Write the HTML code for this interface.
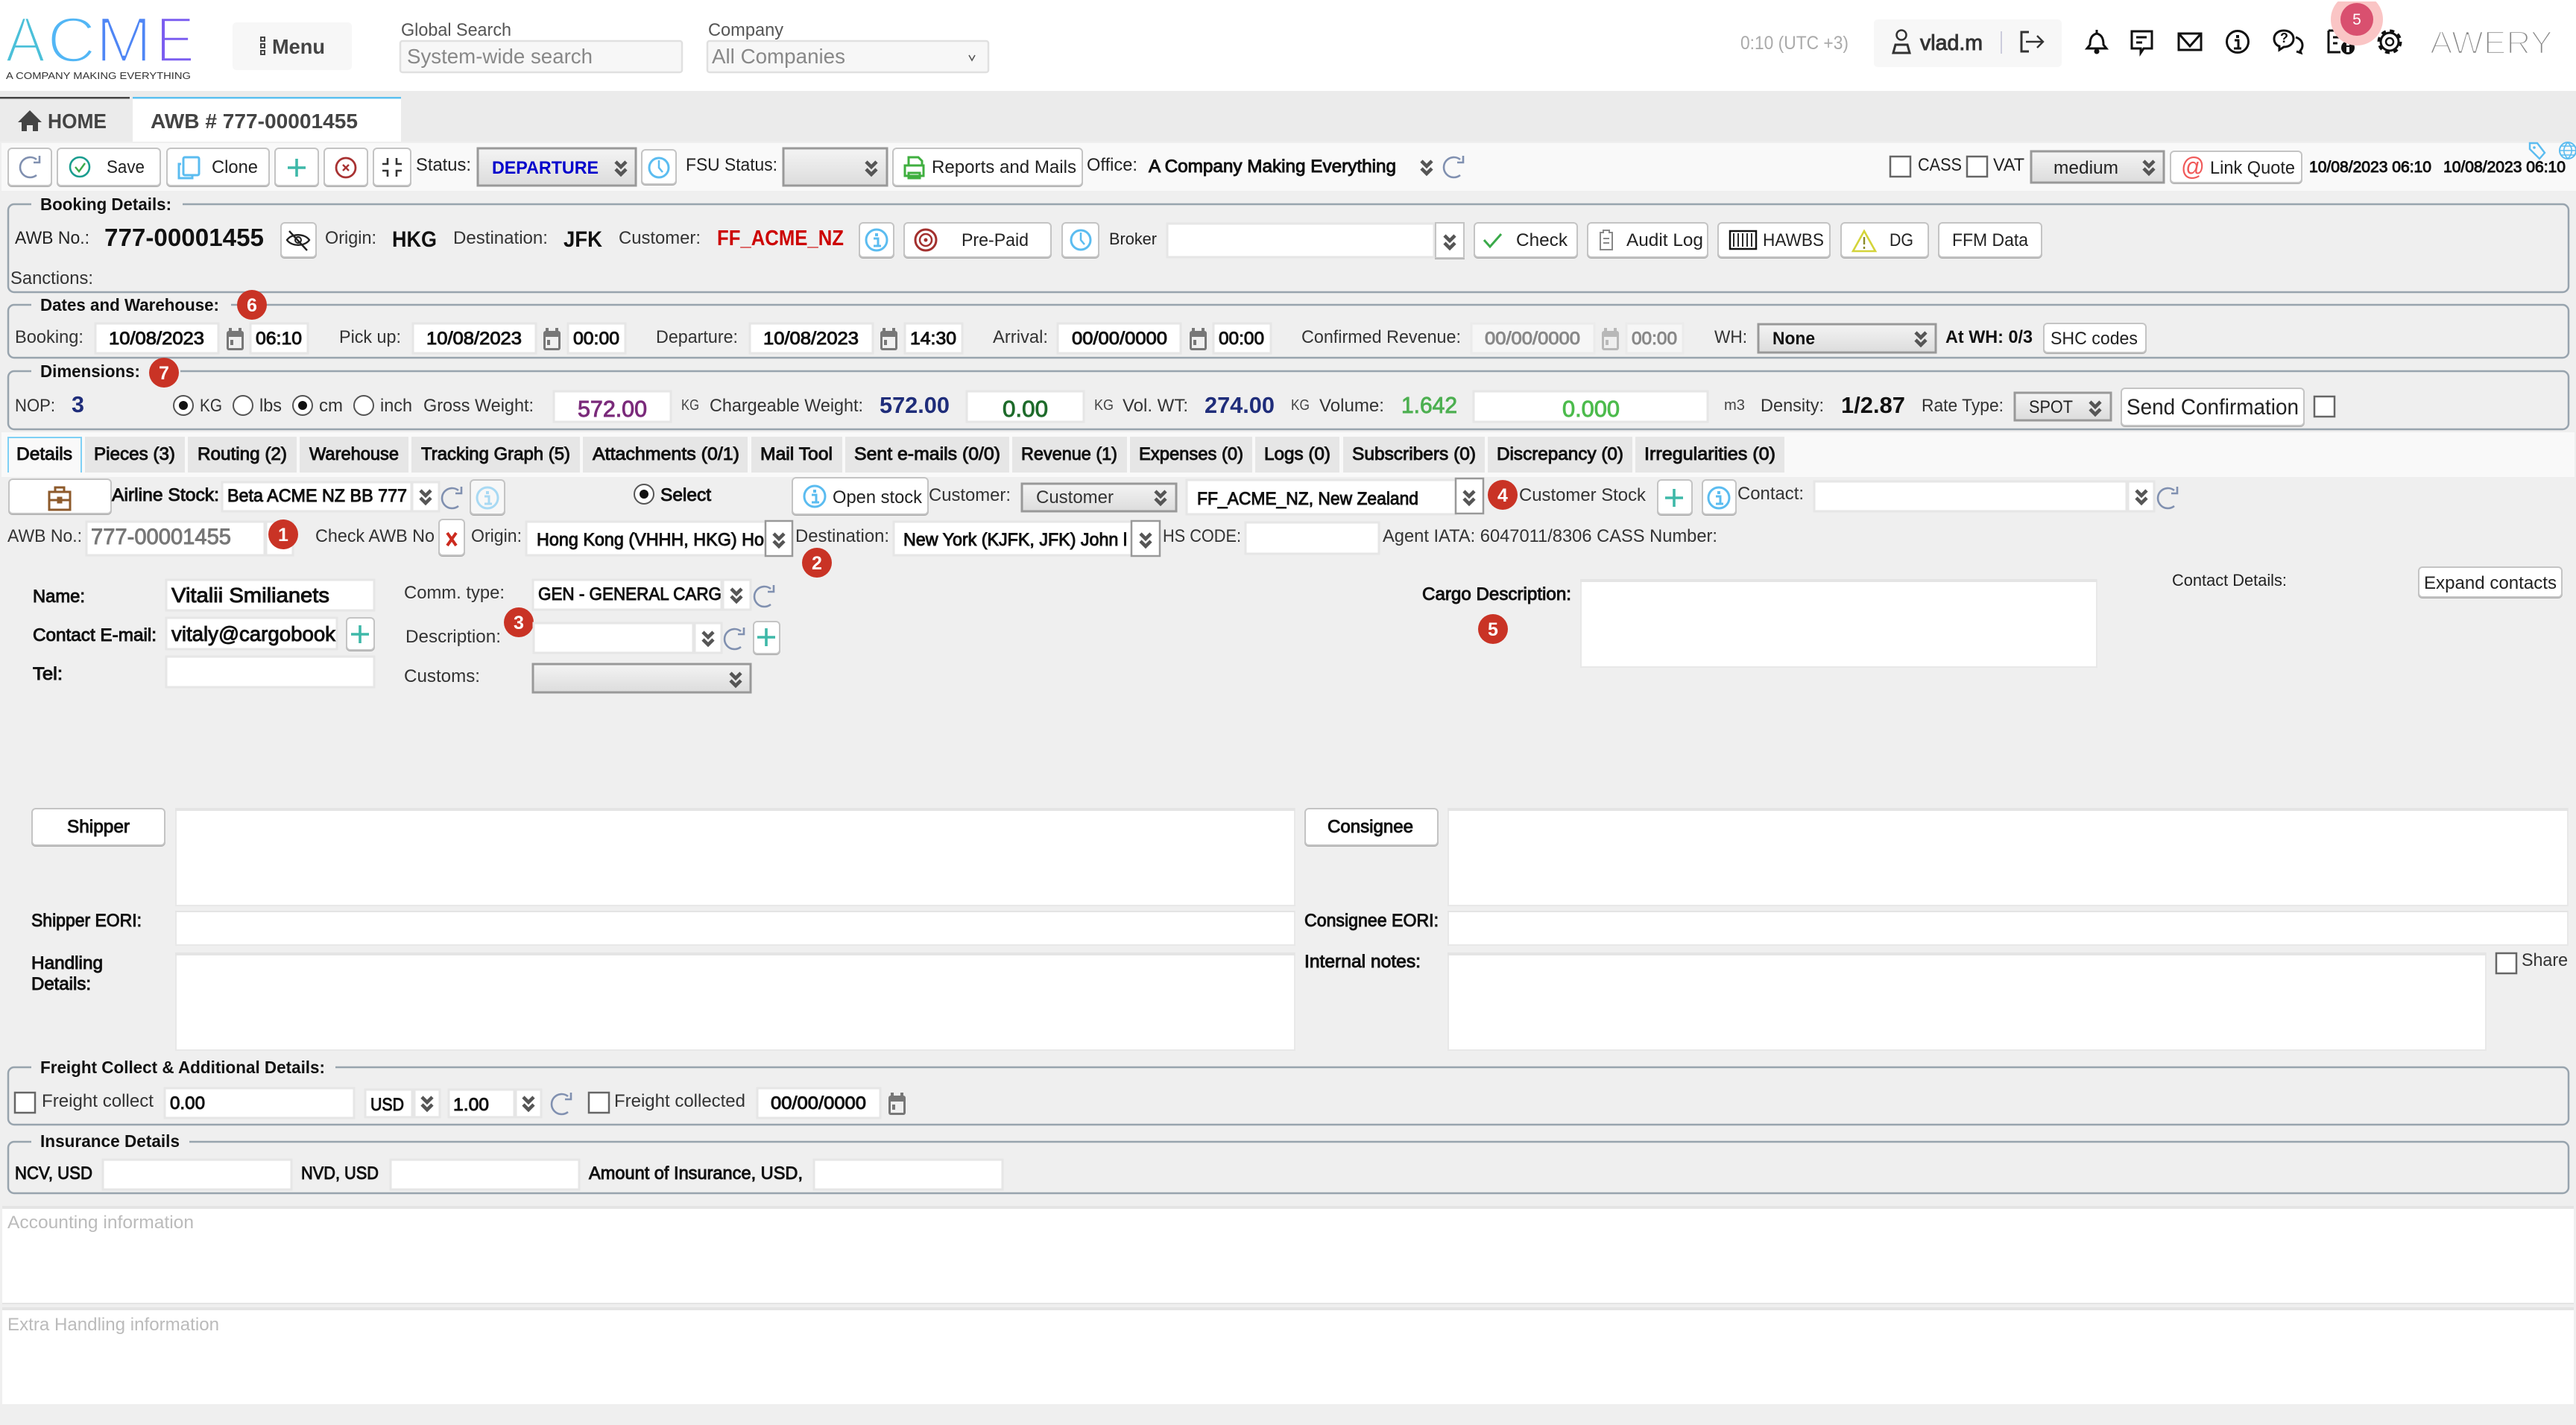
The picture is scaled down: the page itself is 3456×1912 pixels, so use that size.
<!DOCTYPE html>
<html><head><meta charset="utf-8"><title>AWB</title>
<style>
html,body{margin:0;padding:0;background:#efefef;width:3456px;height:1912px;overflow:hidden}
svg{display:block;font-family:"Liberation Sans",Arial,sans-serif}
text{font-size:24px;fill:#222;white-space:pre}
.b{fill:#fff;stroke:#c4c4c4;stroke-width:2;filter:drop-shadow(0 1.5px 0 #aaa)}
.i{fill:#fff;stroke:#e6e6e6;stroke-width:3}
.d{fill:#f6f6f6;stroke:#ebebeb;stroke-width:3}
.s{fill:url(#sg);stroke:#999;stroke-width:3}
.ta{fill:#fff;stroke:#e8e8e8;stroke-width:2}
.band{fill:#e4e4e4}
.fs{fill:none;stroke:#98a4ae;stroke-width:2.5}
.g{fill:#efefef}
text.m{stroke:#111;stroke-width:.95;fill:#111}
text.bd{font-weight:700;fill:#111}
text.lg{font-weight:700;fill:#111;font-size:23px}
text.sm{font-size:20px;fill:#444}
text.n{font-size:31px;font-weight:700;fill:#1f2d7a}
text.bdg{fill:#fff;font-size:25px;font-weight:700;text-anchor:middle}
.bc{fill:#c93325}
.st{fill:none;stroke:#111;stroke-width:3}
.rf{fill:none;stroke:#8090b0;stroke-width:2.6}
.teal{fill:none;stroke:#3eb8a8;stroke-width:3.6}
.blue{fill:none;stroke:#5bbcf0;stroke-width:3}
</style></head><body>
<svg xmlns="http://www.w3.org/2000/svg" width="3456" height="1912" viewBox="0 0 3456 1912">
<defs>
<linearGradient id="sg" x1="0" y1="0" x2="0" y2="1"><stop offset="0" stop-color="#f4f4f4"/><stop offset="1" stop-color="#dcdcdc"/></linearGradient>
<path id="cv" d="M-7-10 0-3 7-10M-7 0 0 7 7 0" fill="none" stroke="#555" stroke-width="4.6"/>
<g id="rf"><path class="rf" d="M9-10A13.5 13.5 0 1 0 9 11"/><path class="rf" d="M13-15V-6H5"/></g>
<g id="cal"><path d="M4 0h4v6H4zM17 0h4v6h-4z" fill="#777"/><rect x="1" y="4" width="23" height="26" rx="3" fill="#777"/><rect x="4" y="12" width="17" height="15" fill="#f0f0f0"/><rect x="6" y="16" width="4" height="7" fill="#777"/></g>
<g id="inf"><circle r="14" fill="none" stroke="#5bbcf0" stroke-width="3"/><rect x="-2" y="-9" width="4" height="4" fill="#5bbcf0"/><path d="M-4-2H2V8M-4 8H6" fill="none" stroke="#5bbcf0" stroke-width="3"/></g>
<g id="pl"><path class="teal" d="M-12 0H12M0-12V12"/></g>
<g id="cb"><rect width="27" height="27" fill="#fff" stroke="#666" stroke-width="2.5"/></g>
</defs>

<rect width="3456" height="1912" fill="#efefef"/>
<!-- header -->
<rect width="3456" height="122" fill="#fff"/>
<g stroke="#fff" stroke-width="3.6">
<text x="7" y="83" style="font-size:86px;fill:#4bc0d9" textLength="54" lengthAdjust="spacingAndGlyphs">A</text>
<text x="63" y="83" style="font-size:86px;fill:#52b6f5" textLength="66" lengthAdjust="spacingAndGlyphs">C</text>
<text x="128" y="83" style="font-size:86px;fill:#4f86f5" textLength="76" lengthAdjust="spacingAndGlyphs">M</text>
<text x="209" y="83" style="font-size:86px;fill:#7a5cf0" textLength="52" lengthAdjust="spacingAndGlyphs">E</text>
</g>
<text x="8" y="106" style="font-size:13px;fill:#333" textLength="248" lengthAdjust="spacingAndGlyphs">A COMPANY MAKING EVERYTHING</text>
<rect x="312" y="30" width="160" height="64" rx="5" fill="#f7f7f7"/>
<path d="M350 50h5v5h-5zM350 59h5v5h-5zM350 68h5v5h-5z" fill="none" stroke="#444" stroke-width="2"/>
<text class="bd" x="365" y="72" style="font-size:28px;fill:#444" textLength="71" lengthAdjust="spacingAndGlyphs">Menu</text>
<text x="538" y="48" style="fill:#555" textLength="148" lengthAdjust="spacingAndGlyphs">Global Search</text>
<rect x="537" y="55" width="378" height="42" rx="3" fill="#f7f7f7" stroke="#e0e0e0" stroke-width="2.5"/>
<text x="546" y="85" style="font-size:28px;fill:#888" textLength="249" lengthAdjust="spacingAndGlyphs">System-wide search</text>
<text x="950" y="48" style="fill:#555" textLength="101" lengthAdjust="spacingAndGlyphs">Company</text>
<rect x="949" y="55" width="377" height="42" rx="3" fill="#f7f7f7" stroke="#e0e0e0" stroke-width="2.5"/>
<text x="955" y="85" style="font-size:28px;fill:#888" textLength="179" lengthAdjust="spacingAndGlyphs">All Companies</text>
<path d="M1300 74l4 7 4-7" fill="none" stroke="#555" stroke-width="1.6"/>

<text x="2335" y="66" style="font-size:25px;fill:#aaa" textLength="145" lengthAdjust="spacingAndGlyphs">0:10 (UTC +3)</text>
<rect x="2514" y="26" width="252" height="64" rx="5" fill="#f7f7f7"/>
<circle cx="2551" cy="47" r="6.5" fill="none" stroke="#333" stroke-width="2.5"/>
<path d="M2540 71l3-11h16l3 11z" fill="none" stroke="#333" stroke-width="3"/>
<text class="m" x="2576" y="67" style="font-size:29px;fill:#333;stroke:#333" textLength="84" lengthAdjust="spacingAndGlyphs">vlad.m</text>
<path d="M2685 42v30" stroke="#ccd" stroke-width="2"/>
<path d="M2722 43h-10v26h10" fill="none" stroke="#333" stroke-width="3"/><path d="M2718 56h22M2733 48l8 8-8 8" fill="none" stroke="#333" stroke-width="2.4"/>
<path class="st" d="M2813 40v5C2805 47 2804 54 2804 60L2800 65H2826L2822 60C2822 54 2821 47 2813 45Z"/><circle cx="2813" cy="69" r="3.5" fill="#111"/>
<path class="st" d="M2860 42h27v23h-11l-4 6v-6h-12z"/><path d="M2866 50h14M2866 57h8" stroke="#111" stroke-width="3"/>
<rect class="st" x="2923" y="45" width="30" height="22"/><path class="st" d="M2923 45l15 17 15-17"/>
<circle class="st" cx="3002" cy="56" r="14.5"/><rect x="3000" y="47" width="4" height="4" fill="#111"/><path d="M2998 54h5v10M2997 65h10" fill="none" stroke="#111" stroke-width="3"/>
<path class="st" d="M3064 41c-8 0-13 5-13 11 0 5 3 9 7 10l0 5 6-4c8 0 13-5 13-11 0-6-5-11-13-11z" /><path class="st" d="M3080 50c6 2 9 6 9 11 0 3-1 5-3 7l1 3-6-2"/>
<text x="3059" y="57" style="font-size:18px;font-weight:700;fill:#111">?</text>
<path class="st" d="M3124 41h24v19M3124 41v29h16"/><path d="M3130 50h10M3130 58h6" stroke="#111" stroke-width="3"/><circle cx="3150" cy="64" r="9" fill="#111"/><rect x="3148" y="58" width="4" height="3" fill="#fff"/><rect x="3148" y="63" width="4" height="7" fill="#fff"/>
<circle cx="3206" cy="56" r="12" fill="none" stroke="#111" stroke-width="3"/><circle cx="3206" cy="56" r="14.5" fill="none" stroke="#111" stroke-width="4" stroke-dasharray="6 5.4"/><circle cx="3206" cy="56" r="5" fill="none" stroke="#111" stroke-width="2.5"/>
<circle cx="3162" cy="26" r="35" fill="#fac5c5"/><circle cx="3162" cy="26" r="22" fill="#d9506f"/>
<text x="3162" y="33" style="font-size:21px;fill:#fff;text-anchor:middle">5</text>
<rect y="0" width="3456" height="2" fill="#fff"/>
<text x="3260" y="72" stroke="#fff" stroke-width="2.4" style="font-size:44px;fill:#888" textLength="165" lengthAdjust="spacingAndGlyphs">AWERY</text>

<!-- tab bar -->
<rect y="122" width="3456" height="68" fill="#ebebeb"/>
<rect y="130" width="174" height="2.5" fill="#444"/>
<rect x="178" y="130" width="360" height="60" fill="#fff"/><rect x="178" y="130" width="360" height="2.5" fill="#5bc0f0"/>
<path d="M40 148l16 16h-5v12h-7v-8h-8v8h-7v-12h-5z" fill="#444"/>
<text class="bd" x="64" y="172" style="font-size:28px;fill:#444" textLength="79" lengthAdjust="spacingAndGlyphs">HOME</text>
<text class="bd" x="202" y="172" style="font-size:28px;fill:#444" textLength="278" lengthAdjust="spacingAndGlyphs">AWB # 777-00001455</text>

<!-- toolbar -->
<rect x="2" y="192" width="3454" height="64" fill="#f9f9f9"/>
<rect class="b" x="11" y="199" width="58" height="50" rx="5"/><use href="#rf" x="40" y="224"/>
<rect class="b" x="77" y="199" width="138" height="50" rx="5"/>
<circle cx="107" cy="224" r="13" fill="none" stroke="#1a9d8f" stroke-width="2.6"/><path d="M101 224l5 6 8-11" fill="none" stroke="#3aaa4a" stroke-width="2.4"/>
<text x="143" y="232" textLength="51" lengthAdjust="spacingAndGlyphs">Save</text>
<rect class="b" x="224" y="199" width="137" height="50" rx="5"/>
<path d="M243 220h-3v19h18v-3" fill="none" stroke="#5bbcf0" stroke-width="3"/><rect x="246" y="211" width="21" height="24" rx="2" fill="none" stroke="#5bbcf0" stroke-width="3"/>
<text x="284" y="232" textLength="62" lengthAdjust="spacingAndGlyphs">Clone</text>
<rect class="b" x="369" y="199" width="58" height="50" rx="5"/><use href="#pl" x="398" y="225"/>
<rect class="b" x="435" y="199" width="58" height="50" rx="5"/>
<circle cx="464" cy="225" r="13" fill="none" stroke="#a83232" stroke-width="2.8"/><path d="M460 221l8 8M468 221l-8 8" stroke="#a83232" stroke-width="2.4"/>
<rect class="b" x="501" y="199" width="50" height="50" rx="5"/>
<path d="M520 212v8h-7M532 212v8h7M520 237v-8h-7M532 237v-8h7" fill="none" stroke="#333" stroke-width="2.6"/>
<text x="558" y="229" textLength="74" lengthAdjust="spacingAndGlyphs">Status:</text>
<rect class="s" x="641" y="199" width="212" height="50"/>
<text class="bd" x="660" y="233" style="fill:#0000cc" textLength="143" lengthAdjust="spacingAndGlyphs">DEPARTURE</text><use href="#cv" x="833" y="227"/>
<rect class="b" x="861" y="201" width="46" height="46" rx="5"/><circle cx="884" cy="225" r="13" fill="none" stroke="#5bbcf0" stroke-width="3"/><path d="M884 215v10l5 6" fill="none" stroke="#5bbcf0" stroke-width="2.5"/>
<text x="920" y="229" textLength="123" lengthAdjust="spacingAndGlyphs">FSU Status:</text>
<rect class="s" x="1051" y="199" width="139" height="50"/><use href="#cv" x="1169" y="227"/>
<rect class="b" x="1198" y="199" width="254" height="50" rx="5"/>
<path d="M1219 222v-11h13l5 5v6M1214 222h25v14h-25zM1219 232h15v7h-15z" fill="none" stroke="#3faf3f" stroke-width="3"/>
<text x="1250" y="232" textLength="194" lengthAdjust="spacingAndGlyphs">Reports and Mails</text>
<text x="1458" y="229" textLength="68" lengthAdjust="spacingAndGlyphs">Office:</text>
<text class="m" x="1541" y="231" textLength="332" lengthAdjust="spacingAndGlyphs">A Company Making Everything</text>
<use href="#cv" x="1914" y="226"/><use href="#rf" x="1950" y="224"/>

<use href="#cb" x="2536" y="210"/><text x="2573" y="229" textLength="59" lengthAdjust="spacingAndGlyphs">CASS</text>
<use href="#cb" x="2639" y="210"/><text x="2674" y="229" textLength="42" lengthAdjust="spacingAndGlyphs">VAT</text>
<rect class="s" x="2725" y="203" width="178" height="42"/><text x="2755" y="233" textLength="87" lengthAdjust="spacingAndGlyphs">medium</text><use href="#cv" x="2883" y="226"/>
<rect class="b" x="2912" y="203" width="176" height="42" rx="5"/>
<text x="2926" y="235" style="font-size:34px;fill:#f05a5a" textLength="32" lengthAdjust="spacingAndGlyphs">@</text>
<text x="2965" y="233" textLength="114" lengthAdjust="spacingAndGlyphs">Link Quote</text>
<text class="m" x="3098" y="231" style="font-size:21px" textLength="164" lengthAdjust="spacingAndGlyphs">10/08/2023 06:10</text>
<text class="m" x="3278" y="231" style="font-size:21px" textLength="164" lengthAdjust="spacingAndGlyphs">10/08/2023 06:10</text>
<path d="M3394 192h10l10 13-7 8-13-13z" fill="none" stroke="#5bbcf0" stroke-width="2.4"/><circle cx="3400" cy="198" r="1.8" fill="#5bbcf0"/>
<circle cx="3445" cy="202" r="11" fill="none" stroke="#5bbcf0" stroke-width="2"/><path d="M3434 202h22M3445 191c-7 7-7 15 0 22M3445 191c7 7 7 15 0 22M3436 196h18M3436 208h18" fill="none" stroke="#5bbcf0" stroke-width="1.6"/>

<!-- Booking details -->
<rect class="fs" x="11" y="274" width="3435" height="118" rx="8"/><rect class="g" x="42" y="268" width="203" height="12"/>
<text class="lg" x="54" y="282" textLength="176" lengthAdjust="spacingAndGlyphs">Booking Details:</text>
<text x="20" y="327" textLength="100" lengthAdjust="spacingAndGlyphs">AWB No.:</text>
<text class="bd" x="140" y="330" style="font-size:33px" textLength="214" lengthAdjust="spacingAndGlyphs">777-00001455</text>
<rect class="b" x="377" y="299" width="47" height="46" rx="5"/>
<path d="M385 322c6-9 24-9 30 0-6 9-24 9-30 0zM388 310l24 26" fill="none" stroke="#222" stroke-width="2.4"/><circle cx="400" cy="322" r="4" fill="none" stroke="#222" stroke-width="2"/>
<text x="436" y="327" textLength="69" lengthAdjust="spacingAndGlyphs" style="fill:#333">Origin:</text>
<text class="bd" x="526" y="331" style="font-size:30px" textLength="60" lengthAdjust="spacingAndGlyphs">HKG</text>
<text x="608" y="327" textLength="127" lengthAdjust="spacingAndGlyphs" style="fill:#333">Destination:</text>
<text class="bd" x="756" y="331" style="font-size:30px" textLength="52" lengthAdjust="spacingAndGlyphs">JFK</text>
<text x="830" y="327" textLength="110" lengthAdjust="spacingAndGlyphs" style="fill:#333">Customer:</text>
<text class="bd" x="962" y="329" style="font-size:29px;fill:#cc0000" textLength="170" lengthAdjust="spacingAndGlyphs">FF_ACME_NZ</text>
<rect class="b" x="1153" y="299" width="46" height="46" rx="5"/><use href="#inf" x="1176" y="322"/>
<rect class="b" x="1213" y="299" width="197" height="46" rx="5"/>
<circle cx="1242" cy="322" r="14" fill="none" stroke="#a3302e" stroke-width="3"/><circle cx="1242" cy="322" r="8" fill="none" stroke="#a3302e" stroke-width="2.5"/><circle cx="1242" cy="322" r="2.5" fill="#a3302e"/>
<text x="1290" y="330" textLength="90" lengthAdjust="spacingAndGlyphs">Pre-Paid</text>
<rect class="b" x="1425" y="299" width="49" height="46" rx="5"/><circle cx="1450" cy="322" r="13" fill="none" stroke="#5bbcf0" stroke-width="3"/><path d="M1450 312v10l5 6" fill="none" stroke="#5bbcf0" stroke-width="2.5"/>
<text x="1488" y="328" style="font-size:22px" textLength="64" lengthAdjust="spacingAndGlyphs">Broker</text>
<rect class="i" x="1566" y="300" width="358" height="45"/>
<rect class="b" x="1926" y="299" width="38" height="47"/><use href="#cv" x="1945" y="326"/>
<rect class="b" x="1978" y="299" width="138" height="46" rx="5"/><path d="M1991 322l8 9 15-17" fill="none" stroke="#3aaa4a" stroke-width="3"/>
<text x="2034" y="330" textLength="69" lengthAdjust="spacingAndGlyphs">Check</text>
<rect class="b" x="2130" y="299" width="161" height="46" rx="5"/><path d="M2147 312h4v-3h8v3h4v23h-16zM2151 320h8M2151 326h8" fill="none" stroke="#888" stroke-width="2"/>
<text x="2182" y="330" textLength="103" lengthAdjust="spacingAndGlyphs">Audit Log</text>
<rect class="b" x="2305" y="299" width="150" height="46" rx="5"/><rect x="2321" y="310" width="35" height="24" fill="none" stroke="#111" stroke-width="2.5"/><path d="M2326 313v18M2332 313v18M2338 313v18M2344 313v18M2350 313v18" stroke="#111" stroke-width="1.8"/>
<text x="2365" y="330" textLength="82" lengthAdjust="spacingAndGlyphs">HAWBS</text>
<rect class="b" x="2470" y="299" width="117" height="46" rx="5"/><path d="M2501 310l15 27h-30z" fill="none" stroke="#d4d43a" stroke-width="2.6"/><path d="M2501 318v10M2501 331v3" stroke="#8a8a2a" stroke-width="2.4"/>
<text x="2535" y="330" textLength="32" lengthAdjust="spacingAndGlyphs">DG</text>
<rect class="b" x="2601" y="299" width="138" height="46" rx="5"/><text x="2619" y="330" textLength="102" lengthAdjust="spacingAndGlyphs">FFM Data</text>
<text x="14" y="381" textLength="111" lengthAdjust="spacingAndGlyphs" style="fill:#333">Sanctions:</text>

<!-- Dates -->
<rect class="fs" x="11" y="409" width="3435" height="71" rx="8"/><rect class="g" x="42" y="403" width="268" height="12"/>
<text class="lg" x="54" y="417" textLength="240" lengthAdjust="spacingAndGlyphs">Dates and Warehouse:</text>
<circle class="bc" cx="338" cy="409" r="20"/><text class="bdg" x="338" y="418">6</text>
<text x="20" y="460" textLength="92" lengthAdjust="spacingAndGlyphs" style="fill:#333">Booking:</text>
<rect class="i" x="128" y="434" width="165" height="40"/><text class="m" x="146" y="462" textLength="128" lengthAdjust="spacingAndGlyphs">10/08/2023</text><use href="#cal" x="303" y="440"/>
<rect class="i" x="336" y="434" width="77" height="40"/><text class="m" x="343" y="462" textLength="62" lengthAdjust="spacingAndGlyphs">06:10</text>
<text x="455" y="460" textLength="83" lengthAdjust="spacingAndGlyphs" style="fill:#333">Pick up:</text>
<rect class="i" x="554" y="434" width="165" height="40"/><text class="m" x="572" y="462" textLength="128" lengthAdjust="spacingAndGlyphs">10/08/2023</text><use href="#cal" x="728" y="440"/>
<rect class="i" x="762" y="434" width="77" height="40"/><text class="m" x="769" y="462" textLength="62" lengthAdjust="spacingAndGlyphs">00:00</text>
<text x="880" y="460" textLength="110" lengthAdjust="spacingAndGlyphs" style="fill:#333">Departure:</text>
<rect class="i" x="1006" y="434" width="165" height="40"/><text class="m" x="1024" y="462" textLength="128" lengthAdjust="spacingAndGlyphs">10/08/2023</text><use href="#cal" x="1180" y="440"/>
<rect class="i" x="1214" y="434" width="77" height="40"/><text class="m" x="1221" y="462" textLength="62" lengthAdjust="spacingAndGlyphs">14:30</text>
<text x="1332" y="460" textLength="74" lengthAdjust="spacingAndGlyphs" style="fill:#333">Arrival:</text>
<rect class="i" x="1419" y="434" width="165" height="40"/><text class="m" x="1438" y="462" textLength="128" lengthAdjust="spacingAndGlyphs">00/00/0000</text><use href="#cal" x="1595" y="440"/>
<rect class="i" x="1628" y="434" width="77" height="40"/><text class="m" x="1635" y="462" textLength="61" lengthAdjust="spacingAndGlyphs">00:00</text>
<text x="1746" y="460" textLength="214" lengthAdjust="spacingAndGlyphs" style="fill:#333">Confirmed Revenue:</text>
<rect class="d" x="1974" y="434" width="165" height="40"/><text class="m" x="1992" y="462" style="fill:#888;stroke:#888" textLength="128" lengthAdjust="spacingAndGlyphs">00/00/0000</text>
<g opacity=".45"><use href="#cal" x="2148" y="440"/></g>
<rect class="d" x="2182" y="434" width="76" height="40"/><text class="m" x="2189" y="462" style="fill:#888;stroke:#888" textLength="61" lengthAdjust="spacingAndGlyphs">00:00</text>
<text x="2300" y="460" textLength="44" lengthAdjust="spacingAndGlyphs" style="fill:#333">WH:</text>
<rect class="s" x="2359" y="435" width="238" height="38"/><text class="bd" x="2378" y="462" textLength="57" lengthAdjust="spacingAndGlyphs">None</text><use href="#cv" x="2577" y="456"/>
<text class="bd" x="2610" y="460" textLength="117" lengthAdjust="spacingAndGlyphs">At WH: 0/3</text>
<rect class="b" x="2742" y="434" width="137" height="39" rx="5"/><text x="2751" y="462" textLength="117" lengthAdjust="spacingAndGlyphs">SHC codes</text>

<!-- Dimensions -->
<rect class="fs" x="11" y="498" width="3435" height="78" rx="8"/><rect class="g" x="42" y="492" width="200" height="12"/>
<text class="lg" x="54" y="506" textLength="134" lengthAdjust="spacingAndGlyphs">Dimensions:</text>
<circle class="bc" cx="220" cy="500" r="20"/><text class="bdg" x="220" y="509">7</text>
<text x="20" y="552" textLength="54" lengthAdjust="spacingAndGlyphs" style="fill:#333">NOP:</text>
<text class="n" x="96" y="553" textLength="17" lengthAdjust="spacingAndGlyphs">3</text>
<circle cx="246" cy="544" r="13" fill="#fff" stroke="#555" stroke-width="2"/><circle cx="246" cy="544" r="6" fill="#111"/><text x="268" y="552" textLength="30" lengthAdjust="spacingAndGlyphs" style="fill:#333">KG</text>
<circle cx="326" cy="544" r="13" fill="#fff" stroke="#555" stroke-width="2"/><text x="348" y="552" textLength="30" lengthAdjust="spacingAndGlyphs" style="fill:#333">lbs</text>
<circle cx="406" cy="544" r="13" fill="#fff" stroke="#555" stroke-width="2"/><circle cx="406" cy="544" r="6" fill="#111"/><text x="428" y="552" textLength="32" lengthAdjust="spacingAndGlyphs" style="fill:#333">cm</text>
<circle cx="488" cy="544" r="13" fill="#fff" stroke="#555" stroke-width="2"/><text x="510" y="552" textLength="43" lengthAdjust="spacingAndGlyphs" style="fill:#333">inch</text>
<text x="568" y="552" textLength="148" lengthAdjust="spacingAndGlyphs" style="fill:#333">Gross Weight:</text>
<rect class="i" x="743" y="525" width="157" height="41"/><text class="m" x="775" y="559" style="font-size:31px;fill:#7a2a7a;stroke:#7a2a7a" textLength="93" lengthAdjust="spacingAndGlyphs">572.00</text>
<text class="sm" x="914" y="550" textLength="24" lengthAdjust="spacingAndGlyphs">KG</text>
<text x="952" y="552" textLength="206" lengthAdjust="spacingAndGlyphs" style="fill:#333">Chargeable Weight:</text>
<text class="n" x="1180" y="554" textLength="94" lengthAdjust="spacingAndGlyphs">572.00</text>
<rect class="i" x="1297" y="525" width="157" height="41"/><text class="m" x="1345" y="559" style="font-size:31px;fill:#1e6b2b;stroke:#1e6b2b" textLength="61" lengthAdjust="spacingAndGlyphs">0.00</text>
<text class="sm" x="1468" y="550" textLength="26" lengthAdjust="spacingAndGlyphs">KG</text>
<text x="1506" y="552" textLength="88" lengthAdjust="spacingAndGlyphs" style="fill:#333">Vol. WT:</text>
<text class="n" x="1616" y="554" textLength="94" lengthAdjust="spacingAndGlyphs">274.00</text>
<text class="sm" x="1732" y="550" textLength="25" lengthAdjust="spacingAndGlyphs">KG</text>
<text x="1770" y="552" textLength="87" lengthAdjust="spacingAndGlyphs" style="fill:#333">Volume:</text>
<text class="n" x="1880" y="554" style="fill:#4caf50;font-weight:400;stroke:#4caf50;stroke-width:.9" textLength="75" lengthAdjust="spacingAndGlyphs">1.642</text>
<rect class="i" x="1977" y="525" width="314" height="41"/><text class="m" x="2096" y="559" style="font-size:31px;fill:#4cbb4c;stroke:#4cbb4c" textLength="77" lengthAdjust="spacingAndGlyphs">0.000</text>
<text class="sm" x="2313" y="550" textLength="28" lengthAdjust="spacingAndGlyphs">m3</text>
<text x="2362" y="552" textLength="85" lengthAdjust="spacingAndGlyphs" style="fill:#333">Density:</text>
<text class="bd" x="2470" y="554" style="font-size:31px" textLength="86" lengthAdjust="spacingAndGlyphs">1/2.87</text>
<text x="2578" y="552" textLength="110" lengthAdjust="spacingAndGlyphs" style="fill:#333">Rate Type:</text>
<rect class="s" x="2703" y="527" width="129" height="37"/><text x="2722" y="554" textLength="59" lengthAdjust="spacingAndGlyphs">SPOT</text><use href="#cv" x="2811" y="549"/>
<rect class="b" x="2846" y="521" width="245" height="50" rx="5"/><text x="2853" y="556" style="font-size:30px" textLength="231" lengthAdjust="spacingAndGlyphs">Send Confirmation</text>
<use href="#cb" x="3105" y="532"/>

<!-- sub tabs -->
<rect x="2" y="580" width="3452" height="60" fill="#f9f9f9"/>
<g fill="#e6e6e6">
<rect x="114" y="586" width="134" height="48"/><rect x="252" y="586" width="146" height="48"/><rect x="402" y="586" width="146" height="48"/><rect x="552" y="586" width="226" height="48"/><rect x="782" y="586" width="221" height="48"/><rect x="1008" y="586" width="122" height="48"/><rect x="1134" y="586" width="220" height="48"/><rect x="1358" y="586" width="154" height="48"/><rect x="1516" y="586" width="164" height="48"/><rect x="1684" y="586" width="113" height="48"/><rect x="1802" y="586" width="190" height="48"/><rect x="1996" y="586" width="194" height="48"/><rect x="2194" y="586" width="200" height="48"/>
</g>
<path d="M11 634V587H109V634" fill="none" stroke="#7fd0f5" stroke-width="2"/>
<g class="tb">
<text class="m" x="22" y="617" textLength="75" lengthAdjust="spacingAndGlyphs">Details</text>
<text class="m" x="126" y="617" textLength="109" lengthAdjust="spacingAndGlyphs">Pieces (3)</text>
<text class="m" x="265" y="617" textLength="120" lengthAdjust="spacingAndGlyphs">Routing (2)</text>
<text class="m" x="415" y="617" textLength="120" lengthAdjust="spacingAndGlyphs">Warehouse</text>
<text class="m" x="565" y="617" textLength="200" lengthAdjust="spacingAndGlyphs">Tracking Graph (5)</text>
<text class="m" x="795" y="617" textLength="197" lengthAdjust="spacingAndGlyphs">Attachments (0/1)</text>
<text class="m" x="1020" y="617" textLength="97" lengthAdjust="spacingAndGlyphs">Mail Tool</text>
<text class="m" x="1146" y="617" textLength="196" lengthAdjust="spacingAndGlyphs">Sent e-mails (0/0)</text>
<text class="m" x="1370" y="617" textLength="129" lengthAdjust="spacingAndGlyphs">Revenue (1)</text>
<text class="m" x="1528" y="617" textLength="140" lengthAdjust="spacingAndGlyphs">Expenses (0)</text>
<text class="m" x="1696" y="617" textLength="89" lengthAdjust="spacingAndGlyphs">Logs (0)</text>
<text class="m" x="1814" y="617" textLength="166" lengthAdjust="spacingAndGlyphs">Subscribers (0)</text>
<text class="m" x="2008" y="617" textLength="170" lengthAdjust="spacingAndGlyphs">Discrepancy (0)</text>
<text class="m" x="2206" y="617" textLength="176" lengthAdjust="spacingAndGlyphs">Irregularities (0)</text>
</g>

<!-- row 1 -->
<rect class="b" x="12" y="643" width="137" height="46" rx="5"/>
<path d="M74 660v-6h12v6M66 660h28v24h-28zM66 671h28M78 668h4v6h-4z" fill="none" stroke="#8d5a2b" stroke-width="3"/>
<text class="m" x="150" y="672" textLength="144" lengthAdjust="spacingAndGlyphs">Airline Stock:</text>
<rect class="i" x="298" y="647" width="254" height="39"/><text class="m" x="305" y="673" textLength="241" lengthAdjust="spacingAndGlyphs">Beta ACME NZ BB 777</text>
<rect class="i" x="553" y="647" width="36" height="39"/><use href="#cv" x="571" y="668"/><use href="#rf" x="606" y="668"/>
<rect class="b" x="631" y="644" width="46" height="46" rx="5" style="fill:#f7f7f7"/><g opacity=".5"><use href="#inf" x="654" y="668"/></g>
<circle cx="864" cy="663" r="13" fill="#fff" stroke="#555" stroke-width="2"/><circle cx="864" cy="663" r="6" fill="#111"/>
<text class="m" x="886" y="672" textLength="68" lengthAdjust="spacingAndGlyphs">Select</text>
<rect class="b" x="1063" y="641" width="182" height="49" rx="5"/><use href="#inf" x="1093" y="666"/>
<text x="1117" y="675" textLength="120" lengthAdjust="spacingAndGlyphs">Open stock</text>
<text x="1246" y="672" textLength="110" lengthAdjust="spacingAndGlyphs" style="fill:#333">Customer:</text>
<rect class="s" x="1371" y="649" width="207" height="37"/><text x="1390" y="675" textLength="104" lengthAdjust="spacingAndGlyphs" style="fill:#333">Customer</text><use href="#cv" x="1557" y="669"/>
<rect class="i" x="1592" y="644" width="361" height="46"/><text class="m" x="1606" y="677" textLength="297" lengthAdjust="spacingAndGlyphs">FF_ACME_NZ, New Zealand</text>
<rect x="1953" y="642" width="37" height="47" fill="#fff" stroke="#999" stroke-width="2.5"/><use href="#cv" x="1971" y="669"/>
<circle class="bc" cx="2016" cy="664" r="20"/><text class="bdg" x="2016" y="673">4</text>
<text x="2038" y="672" textLength="170" lengthAdjust="spacingAndGlyphs" style="fill:#333">Customer Stock</text>
<rect class="b" x="2224" y="644" width="46" height="46" rx="5"/><use href="#pl" x="2246" y="668"/>
<rect class="b" x="2284" y="644" width="45" height="46" rx="5"/><use href="#inf" x="2306" y="668"/>
<text x="2331" y="670" textLength="89" lengthAdjust="spacingAndGlyphs" style="fill:#333">Contact:</text>
<rect class="i" x="2434" y="646" width="419" height="40"/><rect class="i" x="2855" y="646" width="35" height="40"/><use href="#cv" x="2873" y="668"/><use href="#rf" x="2908" y="668"/>

<!-- row 2 -->
<text x="10" y="727" textLength="100" lengthAdjust="spacingAndGlyphs" style="fill:#333">AWB No.:</text>
<rect class="i" x="116" y="700" width="239" height="45"/><rect class="i" x="357" y="700" width="36" height="45"/>
<text class="m" x="122" y="730" style="font-size:30px;fill:#777;stroke:#777" textLength="188" lengthAdjust="spacingAndGlyphs">777-00001455</text>
<circle class="bc" cx="380" cy="717" r="20"/><text class="bdg" x="380" y="726">1</text>
<text x="423" y="727" textLength="160" lengthAdjust="spacingAndGlyphs" style="fill:#333">Check AWB No</text>
<rect class="b" x="589" y="697" width="34" height="48" rx="5"/><path d="M600 715l12 17M612 715l-12 17" stroke="#cc2a1e" stroke-width="4"/>
<text x="632" y="727" textLength="68" lengthAdjust="spacingAndGlyphs" style="fill:#333">Origin:</text>
<rect class="i" x="706" y="700" width="321" height="45"/><text class="m" x="720" y="732" textLength="305" lengthAdjust="spacingAndGlyphs">Hong Kong (VHHH, HKG) Ho</text>
<rect x="1027" y="699" width="36" height="47" fill="#fff" stroke="#999" stroke-width="2.5"/><use href="#cv" x="1045" y="726"/>
<text x="1067" y="727" textLength="126" lengthAdjust="spacingAndGlyphs" style="fill:#333">Destination:</text>
<circle class="bc" cx="1096" cy="755" r="20"/><text class="bdg" x="1096" y="764">2</text>
<rect class="i" x="1199" y="700" width="319" height="45"/><text class="m" x="1212" y="732" textLength="300" lengthAdjust="spacingAndGlyphs">New York (KJFK, JFK) John l</text>
<rect x="1518" y="699" width="38" height="47" fill="#fff" stroke="#999" stroke-width="2.5"/><use href="#cv" x="1537" y="726"/>
<text x="1560" y="727" textLength="105" lengthAdjust="spacingAndGlyphs" style="fill:#333">HS CODE:</text>
<rect class="i" x="1671" y="701" width="179" height="42"/>
<text x="1855" y="727" textLength="449" lengthAdjust="spacingAndGlyphs" style="fill:#333">Agent IATA: 6047011/8306 CASS Number:</text>

<!-- form -->
<text class="m" x="44" y="808" textLength="70" lengthAdjust="spacingAndGlyphs">Name:</text>
<rect class="i" x="223" y="778" width="279" height="41"/><text class="m" x="230" y="808" style="font-size:28px" textLength="212" lengthAdjust="spacingAndGlyphs">Vitalii Smilianets</text>
<text class="m" x="44" y="860" textLength="166" lengthAdjust="spacingAndGlyphs">Contact E-mail:</text>
<rect class="i" x="223" y="829" width="229" height="42"/><text class="m" x="230" y="860" style="font-size:28px" textLength="220" lengthAdjust="spacingAndGlyphs">vitaly@cargobook</text>
<rect class="b" x="465" y="829" width="37" height="43" rx="5"/><use href="#pl" x="483" y="851"/>
<text class="m" x="44" y="912" textLength="40" lengthAdjust="spacingAndGlyphs">Tel:</text>
<rect class="i" x="223" y="881" width="279" height="41"/>
<text x="542" y="803" textLength="135" lengthAdjust="spacingAndGlyphs" style="fill:#333">Comm. type:</text>
<rect class="i" x="715" y="778" width="253" height="40"/><text class="m" x="722" y="805" textLength="246" lengthAdjust="spacingAndGlyphs">GEN - GENERAL CARG</text>
<rect class="i" x="970" y="778" width="37" height="40"/><use href="#cv" x="988" y="800"/><use href="#rf" x="1025" y="800"/>
<circle class="bc" cx="696" cy="835" r="20"/><text class="bdg" x="696" y="844">3</text>
<text x="544" y="862" textLength="128" lengthAdjust="spacingAndGlyphs" style="fill:#333">Description:</text>
<rect class="i" x="716" y="836" width="214" height="40"/><rect class="i" x="932" y="836" width="36" height="40"/><use href="#cv" x="950" y="858"/><use href="#rf" x="985" y="857"/>
<rect class="b" x="1011" y="834" width="35" height="43" rx="5"/><use href="#pl" x="1028" y="855"/>
<text x="542" y="915" textLength="102" lengthAdjust="spacingAndGlyphs" style="fill:#333">Customs:</text>
<rect class="s" x="715" y="891" width="292" height="38"/><use href="#cv" x="987" y="913"/>
<text class="m" x="1908" y="805" textLength="200" lengthAdjust="spacingAndGlyphs">Cargo Description:</text>
<circle class="bc" cx="2003" cy="844" r="20"/><text class="bdg" x="2003" y="853">5</text>
<rect class="ta" x="2121" y="778" width="692" height="117"/><rect class="band" x="2120" y="777" width="693" height="4"/>
<text x="2914" y="786" style="font-size:22px" textLength="154" lengthAdjust="spacingAndGlyphs">Contact Details:</text>
<rect class="b" x="3245" y="761" width="192" height="40" rx="5"/><text x="3252" y="790" textLength="178" lengthAdjust="spacingAndGlyphs">Expand contacts</text>

<!-- shipper / consignee -->
<rect class="b" x="43" y="1085" width="178" height="49" rx="5"/><text class="m" x="90" y="1117" textLength="84" lengthAdjust="spacingAndGlyphs">Shipper</text>
<rect class="ta" x="236" y="1085" width="1501" height="130"/><rect class="band" x="235" y="1084" width="1502" height="4"/>
<text class="m" x="42" y="1243" textLength="148" lengthAdjust="spacingAndGlyphs">Shipper EORI:</text>
<rect class="ta" x="236" y="1223" width="1501" height="45"/><rect class="band" x="235" y="1222" width="1502" height="2"/>
<text class="m" x="42" y="1300" textLength="96" lengthAdjust="spacingAndGlyphs">Handling</text>
<text class="m" x="42" y="1328" textLength="80" lengthAdjust="spacingAndGlyphs">Details:</text>
<rect class="ta" x="236" y="1279" width="1501" height="130"/><rect class="band" x="235" y="1278" width="1502" height="4"/>
<rect class="b" x="1751" y="1085" width="178" height="49" rx="5"/><text class="m" x="1781" y="1117" textLength="115" lengthAdjust="spacingAndGlyphs">Consignee</text>
<rect class="ta" x="1943" y="1085" width="1502" height="130"/><rect class="band" x="1942" y="1084" width="1503" height="4"/>
<text class="m" x="1750" y="1243" textLength="180" lengthAdjust="spacingAndGlyphs">Consignee EORI:</text>
<rect class="ta" x="1943" y="1223" width="1502" height="45"/><rect class="band" x="1942" y="1222" width="1503" height="2"/>
<text class="m" x="1750" y="1298" textLength="156" lengthAdjust="spacingAndGlyphs">Internal notes:</text>
<rect class="ta" x="1943" y="1279" width="1392" height="130"/><rect class="band" x="1942" y="1278" width="1393" height="4"/>
<use href="#cb" x="3349" y="1279"/><text x="3383" y="1296" textLength="62" lengthAdjust="spacingAndGlyphs" style="fill:#333">Share</text>

<!-- freight -->
<rect class="fs" x="11" y="1432" width="3435" height="77" rx="8"/><rect class="g" x="42" y="1426" width="408" height="12"/>
<text class="lg" x="54" y="1440" textLength="382" lengthAdjust="spacingAndGlyphs">Freight Collect &amp; Additional Details:</text>
<use href="#cb" x="20" y="1466"/><text x="56" y="1485" textLength="150" lengthAdjust="spacingAndGlyphs" style="fill:#333">Freight collect</text>
<rect class="i" x="221" y="1460" width="254" height="40"/><text class="m" x="228" y="1488" textLength="47" lengthAdjust="spacingAndGlyphs">0.00</text>
<rect class="i" x="490" y="1462" width="63" height="37"/><text class="m" x="497" y="1490" textLength="45" lengthAdjust="spacingAndGlyphs">USD</text>
<rect class="i" x="556" y="1462" width="34" height="37"/><use href="#cv" x="573" y="1482"/>
<rect class="i" x="602" y="1462" width="88" height="37"/><text class="m" x="608" y="1490" textLength="48" lengthAdjust="spacingAndGlyphs">1.00</text>
<rect class="i" x="692" y="1462" width="34" height="37"/><use href="#cv" x="709" y="1482"/><use href="#rf" x="753" y="1481"/>
<use href="#cb" x="790" y="1466"/><text x="824" y="1485" textLength="176" lengthAdjust="spacingAndGlyphs" style="fill:#333">Freight collected</text>
<rect class="i" x="1016" y="1460" width="165" height="40"/><text class="m" x="1034" y="1488" textLength="128" lengthAdjust="spacingAndGlyphs">00/00/0000</text><use href="#cal" x="1191" y="1466"/>

<!-- insurance -->
<rect class="fs" x="11" y="1532" width="3435" height="69" rx="8"/><rect class="g" x="42" y="1526" width="212" height="12"/>
<text class="lg" x="54" y="1539" textLength="187" lengthAdjust="spacingAndGlyphs">Insurance Details</text>
<text class="m" x="20" y="1582" textLength="104" lengthAdjust="spacingAndGlyphs">NCV, USD</text>
<rect class="i" x="138" y="1556" width="253" height="40"/>
<text class="m" x="404" y="1582" textLength="104" lengthAdjust="spacingAndGlyphs">NVD, USD</text>
<rect class="i" x="524" y="1556" width="253" height="40"/>
<text class="m" x="790" y="1582" textLength="287" lengthAdjust="spacingAndGlyphs">Amount of Insurance, USD,</text>
<rect class="i" x="1092" y="1556" width="253" height="40"/>

<!-- accounting -->
<rect x="3" y="1618" width="3450" height="131" fill="#fff"/><rect class="band" x="3" y="1618" width="3450" height="4"/><rect class="band" x="3" y="1748" width="3450" height="2"/>
<text x="10" y="1648" style="fill:#bbb" textLength="250" lengthAdjust="spacingAndGlyphs">Accounting information</text>
<rect x="3" y="1754" width="3450" height="130" fill="#fff"/><rect class="band" x="3" y="1754" width="3450" height="4"/>
<text x="10" y="1785" style="fill:#bbb" textLength="284" lengthAdjust="spacingAndGlyphs">Extra Handling information</text>
</svg>
</body></html>
